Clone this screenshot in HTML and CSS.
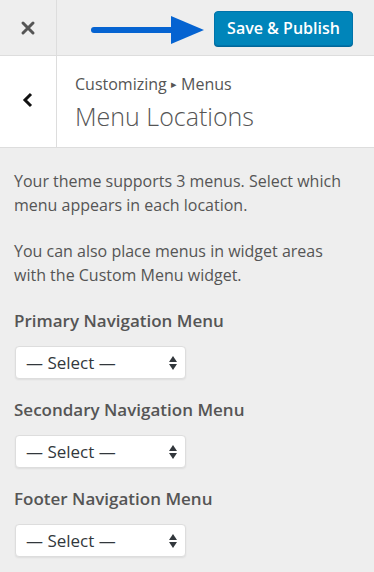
FILE: index.html
```html
<!DOCTYPE html>
<html lang="en">
<head>
    <meta charset="UTF-8">
    <meta name="viewport" content="width=device-width, initial-scale=1.0">
    <title>Customizing Menus</title>
    <link rel="stylesheet" href="styles.css">
</head>
<body>
    <!-- Barra superior -->
    <div class="topbar">
        <div class="close-btn">
            <svg width="16" height="16" viewBox="0 0 16 16">
                <path d="M3 3 L13 13 M13 3 L3 13" stroke="#555" stroke-width="3" stroke-linecap="round"/>
            </svg>
        </div>
        <div class="topbar-actions">
            <svg class="arrow" width="114" height="30" viewBox="0 0 114 30">
                <line x1="4" y1="15" x2="84" y2="15" stroke="#0563d1" stroke-width="6" stroke-linecap="round"/>
                <polygon points="81,1 114,15 81,29" fill="#0563d1"/>
            </svg>
            <button class="publish-btn">Save &amp; Publish</button>
        </div>
    </div>

    <!-- Cabecera de la sección -->
    <div class="section-header">
        <div class="back-btn">
            <svg width="12" height="16" viewBox="0 0 12 16">
                <path d="M9 2 L3 8 L9 14" fill="none" stroke="#111" stroke-width="3"/>
            </svg>
        </div>
        <div class="section-title">
            <div class="crumbs">Customizing <span class="caret">&#9656;</span> Menus</div>
            <h1>Menu Locations</h1>
        </div>
    </div>

    <!-- Contenido -->
    <div class="content">
        <p>Your theme supports 3 menus. Select which menu appears in each location.</p>
        <p>You can also place menus in widget areas with the Custom Menu widget.</p>

        <div class="location">
            <label>Primary Navigation Menu</label>
            <div class="select-box">— Select — <span class="updown"></span></div>
        </div>
        <div class="location">
            <label>Secondary Navigation Menu</label>
            <div class="select-box">— Select — <span class="updown"></span></div>
        </div>
        <div class="location">
            <label>Footer Navigation Menu</label>
            <div class="select-box">— Select — <span class="updown"></span></div>
        </div>
    </div>
</body>
</html>
```

FILE: styles.css
```css
body {
    margin: 0;
    font-family: 'Open Sans', sans-serif;
    background: #eeeeee;
    color: #555;
    width: 374px;
    height: 572px;
    overflow: hidden;
}
.topbar {
    display: flex;
    height: 55px;
    border-bottom: 1px solid #dddddd;
    background: #eeeeee;
}
.close-btn {
    width: 57px;
    border-right: 1px solid #dddddd;
    display: flex;
    justify-content: center;
    align-items: center;
    box-sizing: border-box;
}
.topbar-actions {
    flex: 1;
    display: flex;
    align-items: center;
    padding-left: 33px;
    gap: 10px;
}
.arrow {
    margin-top: 5px;
}
.publish-btn {
    width: 139px;
    height: 35px;
    margin-top: 1px;
    background: #0085ba;
    border: 1px solid #0073aa;
    border-radius: 4px;
    box-shadow: 0 1px 0 #006799;
    color: #fff;
    font-family: 'Open Sans', sans-serif;
    font-weight: 600;
    font-size: 16px;
    padding: 0;
}
.section-header {
    display: flex;
    height: 91px;
    background: #fff;
    border-bottom: 1px solid #dddddd;
}
.back-btn {
    width: 57px;
    border-right: 1px solid #dddddd;
    display: flex;
    justify-content: center;
    align-items: center;
    padding-bottom: 4px;
    box-sizing: border-box;
}
.section-title {
    padding: 17px 0 0 18px;
}
.crumbs {
    font-size: 16px;
    line-height: 22px;
    color: #555;
}
.caret {
    font-size: 11px;
    position: relative;
    top: -2px;
}
h1 {
    margin: 3px 0 0;
    font-size: 25px;
    font-weight: 300;
    line-height: 32px;
    color: #555;
}
.content {
    padding: 21px 22px 0 14px;
}
p {
    margin: 0 0 22px;
    font-size: 16px;
    line-height: 24px;
}
.location {
    margin-bottom: 19px;
}
label {
    display: block;
    font-weight: 600;
    font-size: 17px;
    line-height: 24px;
    margin-bottom: 13px;
}
.select-box {
    width: 171px;
    height: 33px;
    margin-left: 1px;
    box-sizing: border-box;
    background: #fff;
    border: 1px solid #dddddd;
    border-radius: 4px;
    box-shadow: 0 1px 2px rgba(0, 0, 0, 0.07);
    display: flex;
    align-items: center;
    justify-content: space-between;
    padding: 0 8px 0 10px;
    font-size: 17px;
    color: #32373c;
}
.updown {
    width: 8px;
    height: 14px;
    position: relative;
}
.updown::before, .updown::after {
    content: '';
    position: absolute;
    left: 0;
    border-left: 4px solid transparent;
    border-right: 4px solid transparent;
}
.updown::before {
    top: 0;
    border-bottom: 6px solid #32373c;
}
.updown::after {
    bottom: 0;
    border-top: 6px solid #32373c;
}
```
